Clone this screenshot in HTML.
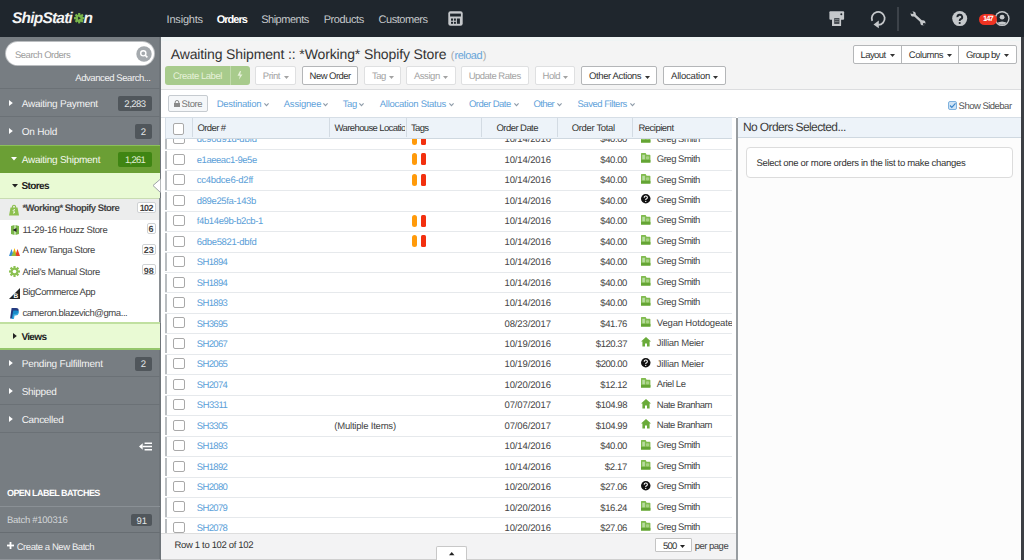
<!DOCTYPE html><html><head><meta charset="utf-8"><style>
*{box-sizing:border-box;margin:0;padding:0}
html,body{width:1024px;height:560px;overflow:hidden;font-family:"Liberation Sans",sans-serif;background:#fff;position:relative;text-rendering:geometricPrecision}
.t{position:absolute;white-space:nowrap;line-height:1}
.b{position:absolute}
svg{position:absolute;overflow:visible}
</style></head><body>
<div class="b" style="left:0px;top:0px;width:1024px;height:37px;background:#1f262d"></div>
<div class="t" style="left: 12px; top: 11px; font-size: 15.5px; color: rgb(244, 244, 244); font-weight: bold; font-style: italic; letter-spacing: -0.795px;">ShipStati</div>
<div class="t" style="left:83.6px;top:11px;font-size:15.5px;color:#f4f4f4;font-weight:bold;font-style:italic">n</div>
<svg style="left:74.3px;top:13.4px" width="10.4" height="10.4" viewBox="-5.2 -5.2 10.4 10.4"><g fill="#79b54a"><circle r="3.7"></circle><rect x="-1.1" y="-5.2" width="2.2" height="2.4" transform="rotate(0)"></rect><rect x="-1.1" y="-5.2" width="2.2" height="2.4" transform="rotate(45)"></rect><rect x="-1.1" y="-5.2" width="2.2" height="2.4" transform="rotate(90)"></rect><rect x="-1.1" y="-5.2" width="2.2" height="2.4" transform="rotate(135)"></rect><rect x="-1.1" y="-5.2" width="2.2" height="2.4" transform="rotate(180)"></rect><rect x="-1.1" y="-5.2" width="2.2" height="2.4" transform="rotate(225)"></rect><rect x="-1.1" y="-5.2" width="2.2" height="2.4" transform="rotate(270)"></rect><rect x="-1.1" y="-5.2" width="2.2" height="2.4" transform="rotate(315)"></rect></g><path d="M-1.1 -1.6 L1.7 0 L-1.1 1.6 Z" fill="#1f262d"></path></svg>
<div class="t" style="left: 166.6px; top: 15px; font-size: 11px; color: rgb(197, 200, 203); letter-spacing: -0.201px;">Insights</div>
<div class="t" style="left: 216.7px; top: 15px; font-size: 11px; color: rgb(255, 255, 255); font-weight: bold; letter-spacing: -0.991px;">Orders</div>
<div class="t" style="left: 261.2px; top: 15px; font-size: 11px; color: rgb(197, 200, 203); letter-spacing: -0.496px;">Shipments</div>
<div class="t" style="left: 323.7px; top: 15px; font-size: 11px; color: rgb(197, 200, 203); letter-spacing: -0.416px;">Products</div>
<div class="t" style="left: 378.5px; top: 15px; font-size: 11px; color: rgb(197, 200, 203); letter-spacing: -0.46px;">Customers</div>
<svg style="left:448px;top:11px" width="15" height="15" viewBox="0 0 15 15"><rect x="0.3" y="0.3" width="14.4" height="14.4" rx="2.2" fill="#c5c8cb"></rect><rect x="2.1" y="2.6" width="10.8" height="2.9" fill="#1f262d"></rect><rect x="3" y="7.5" width="2" height="2.2" fill="#1f262d"></rect><rect x="3" y="10.8" width="2" height="2" fill="#1f262d"></rect><rect x="5.9" y="7.5" width="2" height="2.2" fill="#1f262d"></rect><rect x="5.9" y="10.8" width="2" height="2" fill="#1f262d"></rect><rect x="8.9" y="7.5" width="3" height="5.3" fill="#1f262d"></rect></svg>
<svg style="left:829px;top:11px" width="16" height="16" viewBox="0 0 16 16"><rect x="0.4" y="0.3" width="14.7" height="8.4" rx="1" fill="#c5c8cb"></rect><rect x="3" y="6.6" width="9.1" height="8.4" rx="0.6" fill="#c5c8cb"></rect><rect x="5.2" y="7.1" width="5.2" height="5.8" fill="#3b4147"></rect><rect x="5.8" y="8.3" width="4" height="0.8" fill="#8f9498"></rect><rect x="5.8" y="10.3" width="4" height="0.8" fill="#8f9498"></rect><circle cx="12.3" cy="3.3" r="1" fill="#1f262d"></circle></svg>
<svg style="left:869px;top:10px" width="18" height="20" viewBox="0 0 18 20"><path d="M9.3 14.9 A6.5 6.5 0 1 0 3.2 10.9" fill="none" stroke="#c5c8cb" stroke-width="1.8"></path><path d="M4.5 14.6 L9.8 10.6 L9.8 18.2 Z" fill="#c5c8cb"></path></svg>
<div class="b" style="left:897.4px;top:7px;width:1.2px;height:24px;background:#3c4249"></div>
<svg style="left:910.3px;top:11.2px" width="16.5" height="14.85" viewBox="0 0 20 18"><path d="M4.5 4.2 L15.3 14" stroke="#c5c8cb" stroke-width="2.8" stroke-linecap="round"></path><circle cx="3.9" cy="3.7" r="3.1" fill="#c5c8cb"></circle><circle cx="15.6" cy="14.3" r="3.1" fill="#c5c8cb"></circle><path d="M1.2 2.6 L3.2 0.6 L4.4 3.2 Z" fill="#1f262d"></path><circle cx="2.5" cy="2.2" r="1.4" fill="#1f262d"></circle><circle cx="17" cy="15.8" r="1.4" fill="#1f262d"></circle></svg>
<svg style="left:952px;top:11px" width="16" height="16" viewBox="0 0 16 16"><circle cx="7.7" cy="7.6" r="7.5" fill="#c5c8cb"></circle><path d="M5.4 6.1 A2.4 2.3 0 1 1 8.6 8.2 Q7.7 8.7 7.7 9.9" fill="none" stroke="#1f262d" stroke-width="1.9"></path><circle cx="7.7" cy="12" r="1.1" fill="#1f262d"></circle></svg>
<svg style="left:994.5px;top:11px" width="16" height="16" viewBox="0 0 16 16"><defs><clipPath id="avc"><circle cx="7.1" cy="7.6" r="6.2"></circle></clipPath></defs><circle cx="7.1" cy="7.6" r="7.5" fill="#c5c8cb"></circle><circle cx="7.1" cy="7.6" r="6.1" fill="#1f262d"></circle><g clip-path="url(#avc)"><circle cx="7.1" cy="6.2" r="2.4" fill="#c5c8cb"></circle><path d="M0 13.5 Q7.1 7.5 14.2 13.5 L14.2 16 L0 16 Z" fill="#c5c8cb"></path></g></svg>
<div class="b" style="left:978.7px;top:13.5px;width:18.2px;height:11px;background:#ee3322;border-radius:5.5px"></div>
<div class="t" style="left: 982.9px; top: 15px; font-size: 7.5px; color: rgb(255, 255, 255); font-weight: bold; letter-spacing: -0.871px;">147</div>
<div class="b" style="left:0px;top:37px;width:160px;height:523px;background:#777d82"></div>
<div class="b" style="left:159px;top:37px;width:1.7px;height:523px;background:#6e7479"></div>
<div class="b" style="left:6px;top:42px;width:148px;height:23px;background:#fff;border-radius:12px;box-shadow:0 0 0 1px rgba(255,255,255,.5)"></div>
<div class="t" style="left: 15px; top: 51px; font-size: 9.5px; color: rgb(155, 155, 155); letter-spacing: -0.502px;">Search Orders</div>
<svg style="left:136px;top:46px" width="16" height="16" viewBox="0 0 16 16"><circle cx="8" cy="8" r="7.7" fill="#a5aaae"></circle><circle cx="7.3" cy="7.3" r="2.6" fill="none" stroke="#fff" stroke-width="1.4"></circle><path d="M9.2 9.2 L11.4 11.4" stroke="#fff" stroke-width="1.6"></path></svg>
<div class="t" style="right: 873.5px; top: 74px; font-size: 9.5px; color: rgb(242, 242, 242); letter-spacing: -0.428px;">Advanced Search...</div>
<div class="b" style="left:0px;top:88px;width:160px;height:1px;background:#6b7176"></div>
<svg style="left:9.3px;top:100px" width="4" height="6" viewBox="0 0 4 6"><path d="M0 0 L3.8 3 L0 6 Z" fill="#fff"></path></svg>
<div class="t" style="left: 21.7px; top: 100px; font-size: 10px; color: rgb(243, 243, 243); letter-spacing: -0.232px;">Awaiting Payment</div>
<div class="b" style="left:118px;top:96px;width:34px;height:14.5px;background:#50565b;border-radius:2px"></div>
<div class="t" style="left: 118px; width: 34px; text-align: center; top: 100px; font-size: 9.5px; color: rgb(227, 230, 232); letter-spacing: -0.497px;">2,283</div>
<div class="b" style="left:0px;top:116px;width:160px;height:1px;background:#6b7176"></div>
<svg style="left:9.3px;top:127.9px" width="4" height="6" viewBox="0 0 4 6"><path d="M0 0 L3.8 3 L0 6 Z" fill="#fff"></path></svg>
<div class="t" style="left: 21.7px; top: 128px; font-size: 10px; color: rgb(243, 243, 243); letter-spacing: -0.187px;">On Hold</div>
<div class="b" style="left:135px;top:124px;width:17px;height:14.5px;background:#50565b;border-radius:2px"></div>
<div class="t" style="left:135px;width:17px;text-align:center;top:128px;font-size:9.5px;color:#e3e6e8;">2</div>
<div class="b" style="left:0px;top:144.6px;width:160px;height:28px;background:#6b9f35"></div>
<div class="b" style="left:0px;top:144.6px;width:160px;height:1px;background:#8cc05a"></div>
<svg style="left:10.7px;top:157px" width="6" height="3.5" viewBox="0 0 6 3.5"><path d="M0 0 L6 0 L3 3.5 Z" fill="#fff"></path></svg>
<div class="t" style="left: 21.7px; top: 156px; font-size: 10px; color: rgb(245, 249, 240); letter-spacing: -0.241px;">Awaiting Shipment</div>
<div class="b" style="left:118px;top:152px;width:34px;height:14.5px;background:#3f8513;border-radius:2px"></div>
<div class="t" style="left: 118px; width: 34px; text-align: center; top: 156px; font-size: 9.5px; color: rgb(226, 239, 214); letter-spacing: -0.722px;">1,261</div>
<div class="b" style="left:0px;top:172.6px;width:160px;height:26px;background:#e9fad4"></div>
<div class="b" style="left:0px;top:198px;width:160px;height:1px;background:#c9dcb2"></div>
<svg style="left:12px;top:183.5px" width="6" height="3.5" viewBox="0 0 6 3.5"><path d="M0 0 L6 0 L3 3.5 Z" fill="#222"></path></svg>
<div class="t" style="left: 21.4px; top: 182px; font-size: 10px; color: rgb(34, 34, 34); font-weight: bold; letter-spacing: -0.612px;">Stores</div>
<svg style="left:152px;top:179px" width="9" height="14" viewBox="0 0 9 14"><path d="M8.5 0 L1 6.5 L8.5 13.5" fill="#fff" stroke="#9ea3a7" stroke-width="1"></path></svg>
<div class="b" style="left:0px;top:198.6px;width:159px;height:124px;background:#fff"></div>
<div class="b" style="left:0px;top:198.6px;width:159px;height:21px;background:#eceded"></div>
<div class="b" style="left:159px;top:198px;width:1.7px;height:125px;background:#8a8f93"></div>
<svg style="left:9px;top:204.5px" width="10" height="10.5" viewBox="0 0 10 10.5"><path d="M1.5 2.5 L8.5 2.5 L10 10.5 L0 10.5 Z" fill="#8dc04f"></path><path d="M3.3 3 Q3.3 0.3 5 0.3 Q6.7 0.3 6.7 3" fill="none" stroke="#8dc04f" stroke-width="1.1"></path><path d="M6 4.8 Q4.5 4.3 4.2 5.5 Q4.5 6.5 5.6 6.9 Q6.2 7.9 4 8.1" fill="none" stroke="#fff" stroke-width="1"></path></svg>
<div class="t" style="left: 22.4px; top: 204px; font-size: 9.5px; color: rgb(68, 68, 68); font-weight: bold; letter-spacing: -0.56px;">*Working* Shopify Store</div>
<div class="b" style="left:136.6px;top:201.6px;width:19.3px;height:11px;border:1px solid #cfd2d4;border-radius:2px;background:#fff"></div>
<div class="t" style="left: 136.6px; width: 19.3px; text-align: center; top: 204px; font-size: 9px; color: rgb(68, 68, 68); font-weight: bold; letter-spacing: -0.705px;">102</div>
<svg style="left:10.5px;top:225px" width="8" height="10" viewBox="0 0 8 10"><path d="M0 1 L3.5 0 L3.5 10 L0 9 Z" fill="#7ab648"></path><path d="M4.5 0 L8 1 L8 9 L4.5 10 Z" fill="#7ab648"></path><path d="M1.5 5 L5.5 3 L5.5 7 Z" fill="#222"></path></svg>
<div class="t" style="left: 22.4px; top: 226px; font-size: 9.5px; color: rgb(68, 68, 68); letter-spacing: -0.366px;">11-29-16 Houzz Store</div>
<div class="b" style="left:146.5px;top:222.8px;width:9.1px;height:11px;border:1px solid #cfd2d4;border-radius:2px;background:#fff"></div>
<div class="t" style="left:146.5px;width:9.1px;text-align:center;top:225px;font-size:9px;color:#444;font-weight:bold;">6</div>
<svg style="left:9px;top:247px" width="11" height="9" viewBox="0 0 11 9"><path d="M0 9 L2.5 2 L5 9 Z" fill="#3d8fd6"></path><path d="M3 9 L5.5 1 L8 9 Z" fill="#f0b400"></path><path d="M6 9 L8.5 2 L11 9 Z" fill="#e8402c"></path><path d="M2 9 L5 4 L7.5 9 Z" fill="#7fbf4d" opacity=".8"></path></svg>
<div class="t" style="left: 22.4px; top: 246px; font-size: 9.5px; color: rgb(68, 68, 68); letter-spacing: -0.412px;">A new Tanga Store</div>
<div class="b" style="left:141.9px;top:243.5px;width:13.7px;height:11px;border:1px solid #cfd2d4;border-radius:2px;background:#fff"></div>
<div class="t" style="left:141.9px;width:13.7px;text-align:center;top:246px;font-size:9px;color:#444;font-weight:bold;">23</div>
<svg style="left:9px;top:266px" width="11" height="11" viewBox="0 0 12 12"><g fill="#8cc152"><circle cx="6" cy="6" r="4.2"></circle><rect x="4.8" y="0" width="2.4" height="12"></rect><rect x="0" y="4.8" width="12" height="2.4"></rect><rect x="4.8" y="0" width="2.4" height="12" transform="rotate(45 6 6)"></rect><rect x="4.8" y="0" width="2.4" height="12" transform="rotate(-45 6 6)"></rect></g><circle cx="6" cy="6" r="2" fill="#fff"></circle></svg>
<div class="t" style="left: 22.4px; top: 268px; font-size: 9.5px; color: rgb(68, 68, 68); letter-spacing: -0.354px;">Ariel's Manual Store</div>
<div class="b" style="left:141.9px;top:264.4px;width:13.7px;height:11px;border:1px solid #cfd2d4;border-radius:2px;background:#fff"></div>
<div class="t" style="left:141.9px;width:13.7px;text-align:center;top:267px;font-size:9px;color:#444;font-weight:bold;">98</div>
<svg style="left:9px;top:287.5px" width="11" height="11" viewBox="0 0 11 11"><path d="M11 0 L11 11 L0 11 Z" fill="#222"></path><text x="4.6" y="10" font-size="6.5" font-weight="bold" fill="#fff" font-family="Liberation Sans">B</text></svg>
<div class="t" style="left: 22.4px; top: 288px; font-size: 9.5px; color: rgb(68, 68, 68); letter-spacing: -0.432px;">BigCommerce App</div>
<svg style="left:9.7px;top:307.7px" width="9.2" height="11" viewBox="0 0 9 11"><path d="M1.5 0 L6 0 Q9 0 8.5 3 Q8 6 5 6 L3.5 6 L2.8 10.5 L0 10.5 Z" fill="#253b80"></path><path d="M3.2 2.5 L6.5 2.5 Q9.3 2.5 8.7 5 Q8.2 7.5 5.5 7.5 L4.5 7.5 L3.8 11 L1.5 11 Z" fill="#179bd7" opacity=".85"></path></svg>
<div class="t" style="left: 22.4px; top: 309px; font-size: 9.5px; color: rgb(68, 68, 68); letter-spacing: -0.431px;">cameron.blazevich@gma...</div>
<div class="b" style="left:0px;top:322.4px;width:160px;height:27px;background:#e9fad4"></div>
<div class="b" style="left:0px;top:322.2px;width:160px;height:1.5px;background:#c0e0a0"></div>
<div class="b" style="left:0px;top:347.8px;width:160px;height:1.8px;background:#95c66c"></div>
<svg style="left:12.5px;top:332.5px" width="4" height="6" viewBox="0 0 4 6"><path d="M0 0 L3.8 3 L0 6 Z" fill="#222"></path></svg>
<div class="t" style="left: 21.4px; top: 333px; font-size: 10px; color: rgb(34, 34, 34); font-weight: bold; letter-spacing: -0.652px;">Views</div>
<svg style="left:9.3px;top:360px" width="4" height="6" viewBox="0 0 4 6"><path d="M0 0 L3.8 3 L0 6 Z" fill="#fff"></path></svg>
<div class="t" style="left: 21.7px; top: 360px; font-size: 10px; color: rgb(243, 243, 243); letter-spacing: -0.209px;">Pending Fulfillment</div>
<div class="b" style="left:135px;top:356.7px;width:17px;height:13.900000000000034px;background:#50565b;border-radius:2px"></div>
<div class="t" style="left:135px;width:17px;text-align:center;top:360px;font-size:9.5px;color:#e3e6e8;">2</div>
<div class="b" style="left:0px;top:376.4px;width:160px;height:1px;background:#6b7176"></div>
<svg style="left:9.3px;top:388px" width="4" height="6" viewBox="0 0 4 6"><path d="M0 0 L3.8 3 L0 6 Z" fill="#fff"></path></svg>
<div class="t" style="left: 21.7px; top: 388px; font-size: 10px; color: rgb(243, 243, 243); letter-spacing: -0.273px;">Shipped</div>
<div class="b" style="left:0px;top:404.3px;width:160px;height:1px;background:#6b7176"></div>
<svg style="left:9.3px;top:416px" width="4" height="6" viewBox="0 0 4 6"><path d="M0 0 L3.8 3 L0 6 Z" fill="#fff"></path></svg>
<div class="t" style="left: 21.7px; top: 416px; font-size: 10px; color: rgb(243, 243, 243); letter-spacing: -0.301px;">Cancelled</div>
<div class="b" style="left:0px;top:432.3px;width:160px;height:1px;background:#6b7176"></div>
<svg style="left:138.8px;top:441.8px" width="13" height="9" viewBox="0 0 14 9"><path d="M0 4.5 L4 1 L4 8 Z" fill="#fff"></path><rect x="4" y="3.7" width="10" height="1.6" fill="#fff"></rect><rect x="6" y="0.2" width="8" height="1.6" fill="#fff"></rect><rect x="6" y="7.2" width="8" height="1.6" fill="#fff"></rect></svg>
<div class="t" style="left: 7px; top: 489px; font-size: 9px; color: rgb(255, 255, 255); font-weight: bold; letter-spacing: -0.578px;">OPEN LABEL BATCHES</div>
<div class="b" style="left:0px;top:505.6px;width:160px;height:1px;background:#8a9095"></div>
<div class="t" style="left: 7px; top: 516px; font-size: 9.5px; color: rgb(211, 214, 216); letter-spacing: -0.269px;">Batch #100316</div>
<div class="b" style="left:131.4px;top:513.7px;width:20.900000000000006px;height:12.799999999999955px;background:#50565b;border-radius:2px"></div>
<div class="t" style="left:131.4px;width:20.900000000000006px;text-align:center;top:517px;font-size:9.5px;color:#e3e6e8;">91</div>
<div class="b" style="left:0px;top:531.8px;width:160px;height:1.6px;background:#676d72"></div>
<div class="b" style="left:0px;top:558.6px;width:160px;height:1.4px;background:#8f9499"></div>
<svg style="left:7px;top:542px" width="7" height="7" viewBox="0 0 7 7"><rect x="2.6" y="0" width="1.8" height="7" fill="#fff"></rect><rect x="0" y="2.6" width="7" height="1.8" fill="#fff"></rect></svg>
<div class="t" style="left: 16.7px; top: 543px; font-size: 9.5px; color: rgb(240, 240, 240); letter-spacing: -0.425px;">Create a New Batch</div>
<div class="b" style="left:161px;top:37px;width:860px;height:51.5px;background:#f4f4f4"></div>
<div class="b" style="left:161px;top:37px;width:860px;height:4px;background:#eff4f4"></div>
<div class="b" style="left:161px;top:88.7px;width:860px;height:1px;background:#dcdddf"></div>
<div class="t" style="left: 170.7px; top: 47px; font-size: 14px; color: rgb(51, 51, 51); letter-spacing: -0.125px;">Awaiting Shipment :: *Working* Shopify Store</div>
<div class="t" style="left:450.80px;top:51.00px;font-size:11px;color:#aaa;">(</div>
<div class="t" style="left: 454.5px; top: 51px; font-size: 11px; color: rgb(104, 165, 217); letter-spacing: -0.492px;">reload</div>
<div class="t" style="left:482.80px;top:51.00px;font-size:11px;color:#aaa;">)</div>
<div class="b" style="left:165.1px;top:65.7px;width:84.5px;height:19px;background:#a8cb8c;border-radius:3px"></div>
<div class="b" style="left:230px;top:65.7px;width:1px;height:19px;background:#c2dbad"></div>
<div class="t" style="left: 172.9px; top: 72px; font-size: 9.5px; color: rgb(230, 241, 217); letter-spacing: -0.444px;">Create Label</div>
<svg style="left:237px;top:71.3px" width="6" height="8.5" viewBox="0 0 6 8.5"><path d="M3 0 L0.5 4.8 L2.8 4.8 L2 8.5 L5.5 3.6 L3.2 3.6 L4 0 Z" fill="#e6f1d9"></path></svg>
<div class="b" style="left:255.2px;top:65.7px;width:41.30000000000001px;height:19.0px;background:#fff;border:1px solid #dfe0e1;border-radius:2px"></div>
<div class="t" style="left: 262.8px; top: 72px; font-size: 9.5px; color: rgb(163, 163, 163); letter-spacing: -0.474px;">Print</div>
<svg style="left:284.2px;top:75.6px" width="5" height="3" viewBox="0 0 5 3"><path d="M0 0 L5 0 L2.5 3 Z" fill="#a3a3a3"></path></svg>
<div class="b" style="left:302.2px;top:65.7px;width:56.0px;height:19.0px;background:#fff;border:1px solid #b4b6b8;border-radius:2px"></div>
<div class="t" style="left: 309.6px; top: 72px; font-size: 9.5px; color: rgb(51, 51, 51); letter-spacing: -0.545px;">New Order</div>
<div class="b" style="left:364.2px;top:65.7px;width:37.10000000000002px;height:19.0px;background:#fff;border:1px solid #dfe0e1;border-radius:2px"></div>
<div class="t" style="left: 372px; top: 72px; font-size: 9.5px; color: rgb(163, 163, 163); letter-spacing: -0.517px;">Tag</div>
<svg style="left:389.2px;top:75.6px" width="5" height="3" viewBox="0 0 5 3"><path d="M0 0 L5 0 L2.5 3 Z" fill="#a3a3a3"></path></svg>
<div class="b" style="left:406.4px;top:65.7px;width:49.200000000000045px;height:19.0px;background:#fff;border:1px solid #dfe0e1;border-radius:2px"></div>
<div class="t" style="left: 413.9px; top: 72px; font-size: 9.5px; color: rgb(163, 163, 163); letter-spacing: -0.446px;">Assign</div>
<svg style="left:443px;top:75.6px" width="5" height="3" viewBox="0 0 5 3"><path d="M0 0 L5 0 L2.5 3 Z" fill="#a3a3a3"></path></svg>
<div class="b" style="left:461px;top:65.7px;width:68.39999999999998px;height:19.0px;background:#fff;border:1px solid #dfe0e1;border-radius:2px"></div>
<div class="t" style="left: 468.7px; top: 72px; font-size: 9.5px; color: rgb(163, 163, 163); letter-spacing: -0.513px;">Update Rates</div>
<div class="b" style="left:535.1px;top:65.7px;width:40.19999999999993px;height:19.0px;background:#fff;border:1px solid #dfe0e1;border-radius:2px"></div>
<div class="t" style="left: 542.5px; top: 72px; font-size: 9.5px; color: rgb(163, 163, 163); letter-spacing: -0.485px;">Hold</div>
<svg style="left:563px;top:75.6px" width="5" height="3" viewBox="0 0 5 3"><path d="M0 0 L5 0 L2.5 3 Z" fill="#a3a3a3"></path></svg>
<div class="b" style="left:581.3px;top:65.7px;width:76.10000000000002px;height:19.0px;background:#fff;border:1px solid #b4b6b8;border-radius:2px"></div>
<div class="t" style="left: 589px; top: 72px; font-size: 9.5px; color: rgb(51, 51, 51); letter-spacing: -0.375px;">Other Actions</div>
<svg style="left:645px;top:75.6px" width="5" height="3" viewBox="0 0 5 3"><path d="M0 0 L5 0 L2.5 3 Z" fill="#333"></path></svg>
<div class="b" style="left:663.4px;top:65.7px;width:62.30000000000007px;height:19.0px;background:#fff;border:1px solid #b4b6b8;border-radius:2px"></div>
<div class="t" style="left: 671px; top: 72px; font-size: 9.5px; color: rgb(51, 51, 51); letter-spacing: -0.201px;">Allocation</div>
<svg style="left:713.4px;top:75.6px" width="5" height="3" viewBox="0 0 5 3"><path d="M0 0 L5 0 L2.5 3 Z" fill="#333"></path></svg>
<div class="b" style="left:852.9px;top:44.5px;width:163.8px;height:19.2px;background:#fff;border:1px solid #b4b6b8;border-radius:2px"></div>
<div class="b" style="left:901px;top:44.5px;width:1px;height:19.2px;background:#b4b6b8"></div>
<div class="b" style="left:958.3px;top:44.5px;width:1px;height:19.2px;background:#b4b6b8"></div>
<div class="t" style="left: 860.4px; top: 51px; font-size: 9.5px; color: rgb(51, 51, 51); letter-spacing: -0.537px;">Layout</div>
<svg style="left:889.6px;top:54.4px" width="5" height="3" viewBox="0 0 5 3"><path d="M0 0 L5 0 L2.5 3 Z" fill="#333"></path></svg>
<div class="t" style="left: 908.8px; top: 51px; font-size: 9.5px; color: rgb(51, 51, 51); letter-spacing: -0.456px;">Columns</div>
<svg style="left:946.9px;top:54.4px" width="5" height="3" viewBox="0 0 5 3"><path d="M0 0 L5 0 L2.5 3 Z" fill="#333"></path></svg>
<div class="t" style="left: 966px; top: 51px; font-size: 9.5px; color: rgb(51, 51, 51); letter-spacing: -0.675px;">Group by</div>
<svg style="left:1003.7px;top:54.4px" width="5" height="3" viewBox="0 0 5 3"><path d="M0 0 L5 0 L2.5 3 Z" fill="#333"></path></svg>
<div class="b" style="left:161px;top:89.7px;width:860px;height:27.3px;background:#fff"></div>
<div class="b" style="left:161px;top:116.6px;width:575px;height:1px;background:#dfe3e7"></div>
<div class="b" style="left:168.2px;top:94.9px;width:39.4px;height:17.6px;background:#f5f7f9;border:1px solid #c6cbd0;border-radius:2px"></div>
<svg style="left:173.5px;top:100px" width="6" height="7" viewBox="0 0 6 7"><rect x="0" y="3" width="6" height="4" fill="#8a8a8a"></rect><path d="M1.2 3.2 L1.2 2 Q1.2 0.5 3 0.5 Q4.8 0.5 4.8 2 L4.8 3.2" fill="none" stroke="#8a8a8a" stroke-width="1"></path></svg>
<div class="t" style="left: 181.6px; top: 100px; font-size: 9.5px; color: rgb(119, 119, 119); letter-spacing: -0.456px;">Store</div>
<div class="t" style="left: 216.7px; top: 100px; font-size: 9.5px; color: rgb(95, 162, 218); letter-spacing: -0.274px;">Destination</div>
<svg style="left:264.3px;top:103.2px" width="5" height="3.2" viewBox="0 0 5 3.2"><path d="M0.4 0.4 L2.5 2.6 L4.6 0.4" fill="none" stroke="#8d9ba8" stroke-width="1.1"></path></svg>
<div class="t" style="left: 283.7px; top: 100px; font-size: 9.5px; color: rgb(95, 162, 218); letter-spacing: -0.185px;">Assignee</div>
<svg style="left:322.9px;top:103.2px" width="5" height="3.2" viewBox="0 0 5 3.2"><path d="M0.4 0.4 L2.5 2.6 L4.6 0.4" fill="none" stroke="#8d9ba8" stroke-width="1.1"></path></svg>
<div class="t" style="left: 342.8px; top: 100px; font-size: 9.5px; color: rgb(95, 162, 218); letter-spacing: -0.467px;">Tag</div>
<svg style="left:359.2px;top:103.2px" width="5" height="3.2" viewBox="0 0 5 3.2"><path d="M0.4 0.4 L2.5 2.6 L4.6 0.4" fill="none" stroke="#8d9ba8" stroke-width="1.1"></path></svg>
<div class="t" style="left: 379.8px; top: 100px; font-size: 9.5px; color: rgb(95, 162, 218); letter-spacing: -0.27px;">Allocation Status</div>
<svg style="left:449.2px;top:103.2px" width="5" height="3.2" viewBox="0 0 5 3.2"><path d="M0.4 0.4 L2.5 2.6 L4.6 0.4" fill="none" stroke="#8d9ba8" stroke-width="1.1"></path></svg>
<div class="t" style="left: 468.9px; top: 100px; font-size: 9.5px; color: rgb(95, 162, 218); letter-spacing: -0.512px;">Order Date</div>
<svg style="left:513.9px;top:103.2px" width="5" height="3.2" viewBox="0 0 5 3.2"><path d="M0.4 0.4 L2.5 2.6 L4.6 0.4" fill="none" stroke="#8d9ba8" stroke-width="1.1"></path></svg>
<div class="t" style="left: 533.5px; top: 100px; font-size: 9.5px; color: rgb(95, 162, 218); letter-spacing: -0.624px;">Other</div>
<svg style="left:557.4px;top:103.2px" width="5" height="3.2" viewBox="0 0 5 3.2"><path d="M0.4 0.4 L2.5 2.6 L4.6 0.4" fill="none" stroke="#8d9ba8" stroke-width="1.1"></path></svg>
<div class="t" style="left: 577.5px; top: 100px; font-size: 9.5px; color: rgb(95, 162, 218); letter-spacing: -0.466px;">Saved Filters</div>
<svg style="left:629.9px;top:103.2px" width="5" height="3.2" viewBox="0 0 5 3.2"><path d="M0.4 0.4 L2.5 2.6 L4.6 0.4" fill="none" stroke="#8d9ba8" stroke-width="1.1"></path></svg>
<svg style="left:948px;top:101px" width="9" height="9" viewBox="0 0 9 9"><rect x="0.5" y="0.5" width="8" height="8" rx="1.5" fill="#cfe3f5" stroke="#7fb2de" stroke-width="1"></rect><path d="M2 4.5 L3.8 6.3 L7.5 2.3" fill="none" stroke="#3c86c9" stroke-width="1.2"></path></svg>
<div class="t" style="left: 958.6px; top: 102px; font-size: 9.5px; color: rgb(85, 85, 85); letter-spacing: -0.517px;">Show Sidebar</div>
<div class="b" style="left:0;top:139px;width:732.3px;height:394px;overflow:hidden">
<div class="b" style="left:165px;top:-10.15px;width:567.3px;height:20.45px;background:#fff;border-top:1px solid #e6e9ec"></div>
<div class="b" style="left:165.3px;top:-8.65px;width:1.8px;height:18.45px;background:#b9bdc0"></div>
<div class="b" style="left:173.1px;top:-5.65px;width:11.5px;height:11px;border:1px solid #a9a9a9;border-radius:2px;background:#fff"></div>
<div class="t" style="left: 196.8px; top: -4px; font-size: 9.5px; color: rgb(91, 160, 216); letter-spacing: -0.259px;">dc90d91d-dbfd</div>
<div class="b" style="left:411.5px;top:-6.05px;width:5px;height:11.8px;background:#ff9a0a;border-radius:2.5px"></div>
<div class="b" style="left:420.9px;top:-6.05px;width:5px;height:11.8px;background:#f2300f;border-radius:1.5px"></div>
<div class="t" style="right: 181.5px; top: -4px; font-size: 9.5px; color: rgb(68, 68, 68); letter-spacing: -0.129px;">10/14/2016</div>
<div class="t" style="right: 105.3px; top: -4px; font-size: 9.5px; color: rgb(68, 68, 68); letter-spacing: -0.395px;">$40.00</div>
<svg style="left:641px;top:-6.15px" width="9.4" height="9.6" viewBox="0 0 9.4 9.6"><path d="M0 0.6 Q0 0 0.6 0 L4.6 0 L5.6 1.8 L8.8 1.8 Q9.4 1.8 9.4 2.4 L9.4 9.6 L0 9.6 Z" fill="#80bb4e"></path><rect x="1.3" y="1.8" width="2.6" height="4.6" fill="#b9dca2"></rect><rect x="5" y="3.2" width="3.1" height="3.2" rx="1" fill="#a8d286"></rect><rect x="0" y="6.9" width="9.4" height="2.7" fill="#64a434"></rect></svg>
<div class="t" style="left: 656.8px; top: -4px; font-size: 9.5px; color: rgb(68, 68, 68); letter-spacing: -0.495px;">Greg Smith</div>
<div class="b" style="left:165px;top:10.30px;width:567.3px;height:20.45px;background:#fff;border-top:1px solid #e6e9ec"></div>
<div class="b" style="left:165.3px;top:11.80px;width:1.8px;height:18.45px;background:#b9bdc0"></div>
<div class="b" style="left:173.1px;top:14.80px;width:11.5px;height:11px;border:1px solid #a9a9a9;border-radius:2px;background:#fff"></div>
<div class="t" style="left: 196.8px; top: 17px; font-size: 9.5px; color: rgb(91, 160, 216); letter-spacing: -0.471px;">e1aeeac1-9e5e</div>
<div class="b" style="left:411.5px;top:14.40px;width:5px;height:11.8px;background:#ff9a0a;border-radius:2.5px"></div>
<div class="b" style="left:420.9px;top:14.40px;width:5px;height:11.8px;background:#f2300f;border-radius:1.5px"></div>
<div class="t" style="right: 181.5px; top: 17px; font-size: 9.5px; color: rgb(68, 68, 68); letter-spacing: -0.129px;">10/14/2016</div>
<div class="t" style="right: 105.3px; top: 17px; font-size: 9.5px; color: rgb(68, 68, 68); letter-spacing: -0.395px;">$40.00</div>
<svg style="left:641px;top:14.30px" width="9.4" height="9.6" viewBox="0 0 9.4 9.6"><path d="M0 0.6 Q0 0 0.6 0 L4.6 0 L5.6 1.8 L8.8 1.8 Q9.4 1.8 9.4 2.4 L9.4 9.6 L0 9.6 Z" fill="#80bb4e"></path><rect x="1.3" y="1.8" width="2.6" height="4.6" fill="#b9dca2"></rect><rect x="5" y="3.2" width="3.1" height="3.2" rx="1" fill="#a8d286"></rect><rect x="0" y="6.9" width="9.4" height="2.7" fill="#64a434"></rect></svg>
<div class="t" style="left: 656.8px; top: 16px; font-size: 9.5px; color: rgb(68, 68, 68); letter-spacing: -0.495px;">Greg Smith</div>
<div class="b" style="left:165px;top:30.75px;width:567.3px;height:20.45px;background:#fff;border-top:1px solid #e6e9ec"></div>
<div class="b" style="left:165.3px;top:32.25px;width:1.8px;height:18.45px;background:#b9bdc0"></div>
<div class="b" style="left:173.1px;top:35.25px;width:11.5px;height:11px;border:1px solid #a9a9a9;border-radius:2px;background:#fff"></div>
<div class="t" style="left: 196.8px; top: 37px; font-size: 9.5px; color: rgb(91, 160, 216); letter-spacing: -0.255px;">cc4bdce6-d2ff</div>
<div class="b" style="left:411.5px;top:34.85px;width:5px;height:11.8px;background:#ff9a0a;border-radius:2.5px"></div>
<div class="b" style="left:420.9px;top:34.85px;width:5px;height:11.8px;background:#f2300f;border-radius:1.5px"></div>
<div class="t" style="right: 181.5px; top: 37px; font-size: 9.5px; color: rgb(68, 68, 68); letter-spacing: -0.129px;">10/14/2016</div>
<div class="t" style="right: 105.3px; top: 37px; font-size: 9.5px; color: rgb(68, 68, 68); letter-spacing: -0.395px;">$40.00</div>
<svg style="left:641px;top:34.75px" width="9.4" height="9.6" viewBox="0 0 9.4 9.6"><path d="M0 0.6 Q0 0 0.6 0 L4.6 0 L5.6 1.8 L8.8 1.8 Q9.4 1.8 9.4 2.4 L9.4 9.6 L0 9.6 Z" fill="#80bb4e"></path><rect x="1.3" y="1.8" width="2.6" height="4.6" fill="#b9dca2"></rect><rect x="5" y="3.2" width="3.1" height="3.2" rx="1" fill="#a8d286"></rect><rect x="0" y="6.9" width="9.4" height="2.7" fill="#64a434"></rect></svg>
<div class="t" style="left: 656.8px; top: 37px; font-size: 9.5px; color: rgb(68, 68, 68); letter-spacing: -0.495px;">Greg Smith</div>
<div class="b" style="left:165px;top:51.20px;width:567.3px;height:20.45px;background:#fff;border-top:1px solid #e6e9ec"></div>
<div class="b" style="left:165.3px;top:52.70px;width:1.8px;height:18.45px;background:#b9bdc0"></div>
<div class="b" style="left:173.1px;top:55.70px;width:11.5px;height:11px;border:1px solid #a9a9a9;border-radius:2px;background:#fff"></div>
<div class="t" style="left: 196.8px; top: 58px; font-size: 9.5px; color: rgb(91, 160, 216); letter-spacing: -0.37px;">d89e25fa-143b</div>
<div class="t" style="right: 181.5px; top: 58px; font-size: 9.5px; color: rgb(68, 68, 68); letter-spacing: -0.129px;">10/14/2016</div>
<div class="t" style="right: 105.3px; top: 58px; font-size: 9.5px; color: rgb(68, 68, 68); letter-spacing: -0.395px;">$40.00</div>
<svg style="left:641.2px;top:55.20px" width="9.5" height="9.5" viewBox="0 0 9.5 9.5"><circle cx="4.75" cy="4.75" r="4.75" fill="#111"></circle><path d="M3.2 3.7 A1.6 1.5 0 1 1 5.2 5 Q4.75 5.3 4.75 6" fill="none" stroke="#fff" stroke-width="1.1"></path><circle cx="4.75" cy="7.4" r="0.65" fill="#fff"></circle></svg>
<div class="t" style="left: 656.8px; top: 57px; font-size: 9.5px; color: rgb(68, 68, 68); letter-spacing: -0.495px;">Greg Smith</div>
<div class="b" style="left:165px;top:71.65px;width:567.3px;height:20.45px;background:#fff;border-top:1px solid #e6e9ec"></div>
<div class="b" style="left:165.3px;top:73.15px;width:1.8px;height:18.45px;background:#b9bdc0"></div>
<div class="b" style="left:173.1px;top:76.15px;width:11.5px;height:11px;border:1px solid #a9a9a9;border-radius:2px;background:#fff"></div>
<div class="t" style="left: 196.8px; top: 78px; font-size: 9.5px; color: rgb(91, 160, 216); letter-spacing: -0.382px;">f4b14e9b-b2cb-1</div>
<div class="b" style="left:411.5px;top:75.75px;width:5px;height:11.8px;background:#ff9a0a;border-radius:2.5px"></div>
<div class="b" style="left:420.9px;top:75.75px;width:5px;height:11.8px;background:#f2300f;border-radius:1.5px"></div>
<div class="t" style="right: 181.5px; top: 78px; font-size: 9.5px; color: rgb(68, 68, 68); letter-spacing: -0.129px;">10/14/2016</div>
<div class="t" style="right: 105.3px; top: 78px; font-size: 9.5px; color: rgb(68, 68, 68); letter-spacing: -0.395px;">$40.00</div>
<svg style="left:641px;top:75.65px" width="9.4" height="9.6" viewBox="0 0 9.4 9.6"><path d="M0 0.6 Q0 0 0.6 0 L4.6 0 L5.6 1.8 L8.8 1.8 Q9.4 1.8 9.4 2.4 L9.4 9.6 L0 9.6 Z" fill="#80bb4e"></path><rect x="1.3" y="1.8" width="2.6" height="4.6" fill="#b9dca2"></rect><rect x="5" y="3.2" width="3.1" height="3.2" rx="1" fill="#a8d286"></rect><rect x="0" y="6.9" width="9.4" height="2.7" fill="#64a434"></rect></svg>
<div class="t" style="left: 656.8px; top: 77px; font-size: 9.5px; color: rgb(68, 68, 68); letter-spacing: -0.495px;">Greg Smith</div>
<div class="b" style="left:165px;top:92.10px;width:567.3px;height:20.45px;background:#fff;border-top:1px solid #e6e9ec"></div>
<div class="b" style="left:165.3px;top:93.60px;width:1.8px;height:18.45px;background:#b9bdc0"></div>
<div class="b" style="left:173.1px;top:96.60px;width:11.5px;height:11px;border:1px solid #a9a9a9;border-radius:2px;background:#fff"></div>
<div class="t" style="left: 196.8px; top: 99px; font-size: 9.5px; color: rgb(91, 160, 216); letter-spacing: -0.32px;">6dbe5821-dbfd</div>
<div class="b" style="left:411.5px;top:96.20px;width:5px;height:11.8px;background:#ff9a0a;border-radius:2.5px"></div>
<div class="b" style="left:420.9px;top:96.20px;width:5px;height:11.8px;background:#f2300f;border-radius:1.5px"></div>
<div class="t" style="right: 181.5px; top: 99px; font-size: 9.5px; color: rgb(68, 68, 68); letter-spacing: -0.129px;">10/14/2016</div>
<div class="t" style="right: 105.3px; top: 99px; font-size: 9.5px; color: rgb(68, 68, 68); letter-spacing: -0.395px;">$40.00</div>
<svg style="left:641px;top:96.10px" width="9.4" height="9.6" viewBox="0 0 9.4 9.6"><path d="M0 0.6 Q0 0 0.6 0 L4.6 0 L5.6 1.8 L8.8 1.8 Q9.4 1.8 9.4 2.4 L9.4 9.6 L0 9.6 Z" fill="#80bb4e"></path><rect x="1.3" y="1.8" width="2.6" height="4.6" fill="#b9dca2"></rect><rect x="5" y="3.2" width="3.1" height="3.2" rx="1" fill="#a8d286"></rect><rect x="0" y="6.9" width="9.4" height="2.7" fill="#64a434"></rect></svg>
<div class="t" style="left: 656.8px; top: 98px; font-size: 9.5px; color: rgb(68, 68, 68); letter-spacing: -0.495px;">Greg Smith</div>
<div class="b" style="left:165px;top:112.55px;width:567.3px;height:20.45px;background:#fff;border-top:1px solid #e6e9ec"></div>
<div class="b" style="left:165.3px;top:114.05px;width:1.8px;height:18.45px;background:#b9bdc0"></div>
<div class="b" style="left:173.1px;top:117.05px;width:11.5px;height:11px;border:1px solid #a9a9a9;border-radius:2px;background:#fff"></div>
<div class="t" style="left: 196.8px; top: 119px; font-size: 9.5px; color: rgb(91, 160, 216); letter-spacing: -0.649px;">SH1894</div>
<div class="t" style="right: 181.5px; top: 119px; font-size: 9.5px; color: rgb(68, 68, 68); letter-spacing: -0.129px;">10/14/2016</div>
<div class="t" style="right: 105.3px; top: 119px; font-size: 9.5px; color: rgb(68, 68, 68); letter-spacing: -0.395px;">$40.00</div>
<svg style="left:641px;top:116.55px" width="9.4" height="9.6" viewBox="0 0 9.4 9.6"><path d="M0 0.6 Q0 0 0.6 0 L4.6 0 L5.6 1.8 L8.8 1.8 Q9.4 1.8 9.4 2.4 L9.4 9.6 L0 9.6 Z" fill="#80bb4e"></path><rect x="1.3" y="1.8" width="2.6" height="4.6" fill="#b9dca2"></rect><rect x="5" y="3.2" width="3.1" height="3.2" rx="1" fill="#a8d286"></rect><rect x="0" y="6.9" width="9.4" height="2.7" fill="#64a434"></rect></svg>
<div class="t" style="left: 656.8px; top: 118px; font-size: 9.5px; color: rgb(68, 68, 68); letter-spacing: -0.495px;">Greg Smith</div>
<div class="b" style="left:165px;top:133.00px;width:567.3px;height:20.45px;background:#fff;border-top:1px solid #e6e9ec"></div>
<div class="b" style="left:165.3px;top:134.50px;width:1.8px;height:18.45px;background:#b9bdc0"></div>
<div class="b" style="left:173.1px;top:137.50px;width:11.5px;height:11px;border:1px solid #a9a9a9;border-radius:2px;background:#fff"></div>
<div class="t" style="left: 196.8px; top: 140px; font-size: 9.5px; color: rgb(91, 160, 216); letter-spacing: -0.649px;">SH1894</div>
<div class="t" style="right: 181.5px; top: 140px; font-size: 9.5px; color: rgb(68, 68, 68); letter-spacing: -0.129px;">10/14/2016</div>
<div class="t" style="right: 105.3px; top: 140px; font-size: 9.5px; color: rgb(68, 68, 68); letter-spacing: -0.395px;">$40.00</div>
<svg style="left:641px;top:137.00px" width="9.4" height="9.6" viewBox="0 0 9.4 9.6"><path d="M0 0.6 Q0 0 0.6 0 L4.6 0 L5.6 1.8 L8.8 1.8 Q9.4 1.8 9.4 2.4 L9.4 9.6 L0 9.6 Z" fill="#80bb4e"></path><rect x="1.3" y="1.8" width="2.6" height="4.6" fill="#b9dca2"></rect><rect x="5" y="3.2" width="3.1" height="3.2" rx="1" fill="#a8d286"></rect><rect x="0" y="6.9" width="9.4" height="2.7" fill="#64a434"></rect></svg>
<div class="t" style="left: 656.8px; top: 139px; font-size: 9.5px; color: rgb(68, 68, 68); letter-spacing: -0.495px;">Greg Smith</div>
<div class="b" style="left:165px;top:153.45px;width:567.3px;height:20.45px;background:#fff;border-top:1px solid #e6e9ec"></div>
<div class="b" style="left:165.3px;top:154.95px;width:1.8px;height:18.45px;background:#b9bdc0"></div>
<div class="b" style="left:173.1px;top:157.95px;width:11.5px;height:11px;border:1px solid #a9a9a9;border-radius:2px;background:#fff"></div>
<div class="t" style="left: 196.8px; top: 160px; font-size: 9.5px; color: rgb(91, 160, 216); letter-spacing: -0.649px;">SH1893</div>
<div class="t" style="right: 181.5px; top: 160px; font-size: 9.5px; color: rgb(68, 68, 68); letter-spacing: -0.129px;">10/14/2016</div>
<div class="t" style="right: 105.3px; top: 160px; font-size: 9.5px; color: rgb(68, 68, 68); letter-spacing: -0.395px;">$40.00</div>
<svg style="left:641px;top:157.45px" width="9.4" height="9.6" viewBox="0 0 9.4 9.6"><path d="M0 0.6 Q0 0 0.6 0 L4.6 0 L5.6 1.8 L8.8 1.8 Q9.4 1.8 9.4 2.4 L9.4 9.6 L0 9.6 Z" fill="#80bb4e"></path><rect x="1.3" y="1.8" width="2.6" height="4.6" fill="#b9dca2"></rect><rect x="5" y="3.2" width="3.1" height="3.2" rx="1" fill="#a8d286"></rect><rect x="0" y="6.9" width="9.4" height="2.7" fill="#64a434"></rect></svg>
<div class="t" style="left: 656.8px; top: 159px; font-size: 9.5px; color: rgb(68, 68, 68); letter-spacing: -0.495px;">Greg Smith</div>
<div class="b" style="left:165px;top:173.90px;width:567.3px;height:20.45px;background:#fff;border-top:1px solid #e6e9ec"></div>
<div class="b" style="left:165.3px;top:175.40px;width:1.8px;height:18.45px;background:#b9bdc0"></div>
<div class="b" style="left:173.1px;top:178.40px;width:11.5px;height:11px;border:1px solid #a9a9a9;border-radius:2px;background:#fff"></div>
<div class="t" style="left: 196.8px; top: 181px; font-size: 9.5px; color: rgb(91, 160, 216); letter-spacing: -0.649px;">SH3695</div>
<div class="t" style="right: 181.5px; top: 181px; font-size: 9.5px; color: rgb(68, 68, 68); letter-spacing: -0.129px;">08/23/2017</div>
<div class="t" style="right: 105.3px; top: 181px; font-size: 9.5px; color: rgb(68, 68, 68); letter-spacing: -0.395px;">$41.76</div>
<svg style="left:641px;top:177.90px" width="9.4" height="9.6" viewBox="0 0 9.4 9.6"><path d="M0 0.6 Q0 0 0.6 0 L4.6 0 L5.6 1.8 L8.8 1.8 Q9.4 1.8 9.4 2.4 L9.4 9.6 L0 9.6 Z" fill="#80bb4e"></path><rect x="1.3" y="1.8" width="2.6" height="4.6" fill="#b9dca2"></rect><rect x="5" y="3.2" width="3.1" height="3.2" rx="1" fill="#a8d286"></rect><rect x="0" y="6.9" width="9.4" height="2.7" fill="#64a434"></rect></svg>
<div class="t" style="left: 656.8px; top: 180px; font-size: 9.5px; color: rgb(68, 68, 68); letter-spacing: -0.169px;">Vegan Hotdogeater</div>
<div class="b" style="left:165px;top:194.35px;width:567.3px;height:20.45px;background:#fff;border-top:1px solid #e6e9ec"></div>
<div class="b" style="left:165.3px;top:195.85px;width:1.8px;height:18.45px;background:#b9bdc0"></div>
<div class="b" style="left:173.1px;top:198.85px;width:11.5px;height:11px;border:1px solid #a9a9a9;border-radius:2px;background:#fff"></div>
<div class="t" style="left: 196.8px; top: 201px; font-size: 9.5px; color: rgb(91, 160, 216); letter-spacing: -0.649px;">SH2067</div>
<div class="t" style="right: 181.5px; top: 201px; font-size: 9.5px; color: rgb(68, 68, 68); letter-spacing: -0.129px;">10/19/2016</div>
<div class="t" style="right: 105.3px; top: 201px; font-size: 9.5px; color: rgb(68, 68, 68); letter-spacing: -0.459px;">$120.37</div>
<svg style="left:641px;top:198.35px" width="10" height="9.5" viewBox="0 0 10 9.5"><path d="M5 0 L10 4.6 L8.6 4.6 L8.6 9.5 L6 9.5 L6 6.5 L4 6.5 L4 9.5 L1.4 9.5 L1.4 4.6 L0 4.6 Z" fill="#6aab3a"></path></svg>
<div class="t" style="left: 656.8px; top: 200px; font-size: 9.5px; color: rgb(68, 68, 68); letter-spacing: -0.241px;">Jillian Meier</div>
<div class="b" style="left:165px;top:214.80px;width:567.3px;height:20.45px;background:#fff;border-top:1px solid #e6e9ec"></div>
<div class="b" style="left:165.3px;top:216.30px;width:1.8px;height:18.45px;background:#b9bdc0"></div>
<div class="b" style="left:173.1px;top:219.30px;width:11.5px;height:11px;border:1px solid #a9a9a9;border-radius:2px;background:#fff"></div>
<div class="t" style="left: 196.8px; top: 221px; font-size: 9.5px; color: rgb(91, 160, 216); letter-spacing: -0.649px;">SH2065</div>
<div class="t" style="right: 181.5px; top: 221px; font-size: 9.5px; color: rgb(68, 68, 68); letter-spacing: -0.129px;">10/19/2016</div>
<div class="t" style="right: 105.3px; top: 221px; font-size: 9.5px; color: rgb(68, 68, 68); letter-spacing: -0.459px;">$200.00</div>
<svg style="left:641.2px;top:218.80px" width="9.5" height="9.5" viewBox="0 0 9.5 9.5"><circle cx="4.75" cy="4.75" r="4.75" fill="#111"></circle><path d="M3.2 3.7 A1.6 1.5 0 1 1 5.2 5 Q4.75 5.3 4.75 6" fill="none" stroke="#fff" stroke-width="1.1"></path><circle cx="4.75" cy="7.4" r="0.65" fill="#fff"></circle></svg>
<div class="t" style="left: 656.8px; top: 221px; font-size: 9.5px; color: rgb(68, 68, 68); letter-spacing: -0.241px;">Jillian Meier</div>
<div class="b" style="left:165px;top:235.25px;width:567.3px;height:20.45px;background:#fff;border-top:1px solid #e6e9ec"></div>
<div class="b" style="left:165.3px;top:236.75px;width:1.8px;height:18.45px;background:#b9bdc0"></div>
<div class="b" style="left:173.1px;top:239.75px;width:11.5px;height:11px;border:1px solid #a9a9a9;border-radius:2px;background:#fff"></div>
<div class="t" style="left: 196.8px; top: 242px; font-size: 9.5px; color: rgb(91, 160, 216); letter-spacing: -0.649px;">SH2074</div>
<div class="t" style="right: 181.5px; top: 242px; font-size: 9.5px; color: rgb(68, 68, 68); letter-spacing: -0.129px;">10/20/2016</div>
<div class="t" style="right: 105.3px; top: 242px; font-size: 9.5px; color: rgb(68, 68, 68); letter-spacing: -0.395px;">$12.12</div>
<svg style="left:641px;top:239.25px" width="9.4" height="9.6" viewBox="0 0 9.4 9.6"><path d="M0 0.6 Q0 0 0.6 0 L4.6 0 L5.6 1.8 L8.8 1.8 Q9.4 1.8 9.4 2.4 L9.4 9.6 L0 9.6 Z" fill="#80bb4e"></path><rect x="1.3" y="1.8" width="2.6" height="4.6" fill="#b9dca2"></rect><rect x="5" y="3.2" width="3.1" height="3.2" rx="1" fill="#a8d286"></rect><rect x="0" y="6.9" width="9.4" height="2.7" fill="#64a434"></rect></svg>
<div class="t" style="left: 656.8px; top: 241px; font-size: 9.5px; color: rgb(68, 68, 68); letter-spacing: -0.432px;">Ariel Le</div>
<div class="b" style="left:165px;top:255.70px;width:567.3px;height:20.45px;background:#fff;border-top:1px solid #e6e9ec"></div>
<div class="b" style="left:165.3px;top:257.20px;width:1.8px;height:18.45px;background:#b9bdc0"></div>
<div class="b" style="left:173.1px;top:260.20px;width:11.5px;height:11px;border:1px solid #a9a9a9;border-radius:2px;background:#fff"></div>
<div class="t" style="left: 196.8px; top: 262px; font-size: 9.5px; color: rgb(91, 160, 216); letter-spacing: -0.508px;">SH3311</div>
<div class="t" style="right: 181.5px; top: 262px; font-size: 9.5px; color: rgb(68, 68, 68); letter-spacing: -0.129px;">07/07/2017</div>
<div class="t" style="right: 105.3px; top: 262px; font-size: 9.5px; color: rgb(68, 68, 68); letter-spacing: -0.459px;">$104.98</div>
<svg style="left:641px;top:259.70px" width="10" height="9.5" viewBox="0 0 10 9.5"><path d="M5 0 L10 4.6 L8.6 4.6 L8.6 9.5 L6 9.5 L6 6.5 L4 6.5 L4 9.5 L1.4 9.5 L1.4 4.6 L0 4.6 Z" fill="#6aab3a"></path></svg>
<div class="t" style="left: 656.8px; top: 262px; font-size: 9.5px; color: rgb(68, 68, 68); letter-spacing: -0.513px;">Nate Branham</div>
<div class="b" style="left:165px;top:276.15px;width:567.3px;height:20.45px;background:#fff;border-top:1px solid #e6e9ec"></div>
<div class="b" style="left:165.3px;top:277.65px;width:1.8px;height:18.45px;background:#b9bdc0"></div>
<div class="b" style="left:173.1px;top:280.65px;width:11.5px;height:11px;border:1px solid #a9a9a9;border-radius:2px;background:#fff"></div>
<div class="t" style="left: 196.8px; top: 283px; font-size: 9.5px; color: rgb(91, 160, 216); letter-spacing: -0.649px;">SH3305</div>
<div class="t" style="left: 334.3px; top: 283px; font-size: 9.5px; color: rgb(68, 68, 68); letter-spacing: -0.211px;">(Multiple Items)</div>
<div class="t" style="right: 181.5px; top: 283px; font-size: 9.5px; color: rgb(68, 68, 68); letter-spacing: -0.129px;">07/06/2017</div>
<div class="t" style="right: 105.3px; top: 283px; font-size: 9.5px; color: rgb(68, 68, 68); letter-spacing: -0.459px;">$104.99</div>
<svg style="left:641px;top:280.15px" width="10" height="9.5" viewBox="0 0 10 9.5"><path d="M5 0 L10 4.6 L8.6 4.6 L8.6 9.5 L6 9.5 L6 6.5 L4 6.5 L4 9.5 L1.4 9.5 L1.4 4.6 L0 4.6 Z" fill="#6aab3a"></path></svg>
<div class="t" style="left: 656.8px; top: 282px; font-size: 9.5px; color: rgb(68, 68, 68); letter-spacing: -0.513px;">Nate Branham</div>
<div class="b" style="left:165px;top:296.60px;width:567.3px;height:20.45px;background:#fff;border-top:1px solid #e6e9ec"></div>
<div class="b" style="left:165.3px;top:298.10px;width:1.8px;height:18.45px;background:#b9bdc0"></div>
<div class="b" style="left:173.1px;top:301.10px;width:11.5px;height:11px;border:1px solid #a9a9a9;border-radius:2px;background:#fff"></div>
<div class="t" style="left: 196.8px; top: 303px; font-size: 9.5px; color: rgb(91, 160, 216); letter-spacing: -0.649px;">SH1893</div>
<div class="t" style="right: 181.5px; top: 303px; font-size: 9.5px; color: rgb(68, 68, 68); letter-spacing: -0.129px;">10/14/2016</div>
<div class="t" style="right: 105.3px; top: 303px; font-size: 9.5px; color: rgb(68, 68, 68); letter-spacing: -0.395px;">$40.00</div>
<svg style="left:641px;top:300.60px" width="9.4" height="9.6" viewBox="0 0 9.4 9.6"><path d="M0 0.6 Q0 0 0.6 0 L4.6 0 L5.6 1.8 L8.8 1.8 Q9.4 1.8 9.4 2.4 L9.4 9.6 L0 9.6 Z" fill="#80bb4e"></path><rect x="1.3" y="1.8" width="2.6" height="4.6" fill="#b9dca2"></rect><rect x="5" y="3.2" width="3.1" height="3.2" rx="1" fill="#a8d286"></rect><rect x="0" y="6.9" width="9.4" height="2.7" fill="#64a434"></rect></svg>
<div class="t" style="left: 656.8px; top: 302px; font-size: 9.5px; color: rgb(68, 68, 68); letter-spacing: -0.495px;">Greg Smith</div>
<div class="b" style="left:165px;top:317.05px;width:567.3px;height:20.45px;background:#fff;border-top:1px solid #e6e9ec"></div>
<div class="b" style="left:165.3px;top:318.55px;width:1.8px;height:18.45px;background:#b9bdc0"></div>
<div class="b" style="left:173.1px;top:321.55px;width:11.5px;height:11px;border:1px solid #a9a9a9;border-radius:2px;background:#fff"></div>
<div class="t" style="left: 196.8px; top: 324px; font-size: 9.5px; color: rgb(91, 160, 216); letter-spacing: -0.649px;">SH1892</div>
<div class="t" style="right: 181.5px; top: 324px; font-size: 9.5px; color: rgb(68, 68, 68); letter-spacing: -0.129px;">10/14/2016</div>
<div class="t" style="right: 105.3px; top: 324px; font-size: 9.5px; color: rgb(68, 68, 68); letter-spacing: -0.297px;">$2.17</div>
<svg style="left:641px;top:321.05px" width="9.4" height="9.6" viewBox="0 0 9.4 9.6"><path d="M0 0.6 Q0 0 0.6 0 L4.6 0 L5.6 1.8 L8.8 1.8 Q9.4 1.8 9.4 2.4 L9.4 9.6 L0 9.6 Z" fill="#80bb4e"></path><rect x="1.3" y="1.8" width="2.6" height="4.6" fill="#b9dca2"></rect><rect x="5" y="3.2" width="3.1" height="3.2" rx="1" fill="#a8d286"></rect><rect x="0" y="6.9" width="9.4" height="2.7" fill="#64a434"></rect></svg>
<div class="t" style="left: 656.8px; top: 323px; font-size: 9.5px; color: rgb(68, 68, 68); letter-spacing: -0.495px;">Greg Smith</div>
<div class="b" style="left:165px;top:337.50px;width:567.3px;height:20.45px;background:#fff;border-top:1px solid #e6e9ec"></div>
<div class="b" style="left:165.3px;top:339.00px;width:1.8px;height:18.45px;background:#b9bdc0"></div>
<div class="b" style="left:173.1px;top:342.00px;width:11.5px;height:11px;border:1px solid #a9a9a9;border-radius:2px;background:#fff"></div>
<div class="t" style="left: 196.8px; top: 344px; font-size: 9.5px; color: rgb(91, 160, 216); letter-spacing: -0.649px;">SH2080</div>
<div class="t" style="right: 181.5px; top: 344px; font-size: 9.5px; color: rgb(68, 68, 68); letter-spacing: -0.129px;">10/20/2016</div>
<div class="t" style="right: 105.3px; top: 344px; font-size: 9.5px; color: rgb(68, 68, 68); letter-spacing: -0.395px;">$27.06</div>
<svg style="left:641.2px;top:341.50px" width="9.5" height="9.5" viewBox="0 0 9.5 9.5"><circle cx="4.75" cy="4.75" r="4.75" fill="#111"></circle><path d="M3.2 3.7 A1.6 1.5 0 1 1 5.2 5 Q4.75 5.3 4.75 6" fill="none" stroke="#fff" stroke-width="1.1"></path><circle cx="4.75" cy="7.4" r="0.65" fill="#fff"></circle></svg>
<div class="t" style="left: 656.8px; top: 343px; font-size: 9.5px; color: rgb(68, 68, 68); letter-spacing: -0.495px;">Greg Smith</div>
<div class="b" style="left:165px;top:357.95px;width:567.3px;height:20.45px;background:#fff;border-top:1px solid #e6e9ec"></div>
<div class="b" style="left:165.3px;top:359.45px;width:1.8px;height:18.45px;background:#b9bdc0"></div>
<div class="b" style="left:173.1px;top:362.45px;width:11.5px;height:11px;border:1px solid #a9a9a9;border-radius:2px;background:#fff"></div>
<div class="t" style="left: 196.8px; top: 365px; font-size: 9.5px; color: rgb(91, 160, 216); letter-spacing: -0.649px;">SH2079</div>
<div class="t" style="right: 181.5px; top: 365px; font-size: 9.5px; color: rgb(68, 68, 68); letter-spacing: -0.129px;">10/20/2016</div>
<div class="t" style="right: 105.3px; top: 365px; font-size: 9.5px; color: rgb(68, 68, 68); letter-spacing: -0.395px;">$16.24</div>
<svg style="left:641px;top:361.95px" width="9.4" height="9.6" viewBox="0 0 9.4 9.6"><path d="M0 0.6 Q0 0 0.6 0 L4.6 0 L5.6 1.8 L8.8 1.8 Q9.4 1.8 9.4 2.4 L9.4 9.6 L0 9.6 Z" fill="#80bb4e"></path><rect x="1.3" y="1.8" width="2.6" height="4.6" fill="#b9dca2"></rect><rect x="5" y="3.2" width="3.1" height="3.2" rx="1" fill="#a8d286"></rect><rect x="0" y="6.9" width="9.4" height="2.7" fill="#64a434"></rect></svg>
<div class="t" style="left: 656.8px; top: 364px; font-size: 9.5px; color: rgb(68, 68, 68); letter-spacing: -0.495px;">Greg Smith</div>
<div class="b" style="left:165px;top:378.40px;width:567.3px;height:20.45px;background:#fff;border-top:1px solid #e6e9ec"></div>
<div class="b" style="left:165.3px;top:379.90px;width:1.8px;height:18.45px;background:#b9bdc0"></div>
<div class="b" style="left:173.1px;top:382.90px;width:11.5px;height:11px;border:1px solid #a9a9a9;border-radius:2px;background:#fff"></div>
<div class="t" style="left: 196.8px; top: 385px; font-size: 9.5px; color: rgb(91, 160, 216); letter-spacing: -0.649px;">SH2078</div>
<div class="t" style="right: 181.5px; top: 385px; font-size: 9.5px; color: rgb(68, 68, 68); letter-spacing: -0.129px;">10/20/2016</div>
<div class="t" style="right: 105.3px; top: 385px; font-size: 9.5px; color: rgb(68, 68, 68); letter-spacing: -0.395px;">$27.06</div>
<svg style="left:641px;top:382.40px" width="9.4" height="9.6" viewBox="0 0 9.4 9.6"><path d="M0 0.6 Q0 0 0.6 0 L4.6 0 L5.6 1.8 L8.8 1.8 Q9.4 1.8 9.4 2.4 L9.4 9.6 L0 9.6 Z" fill="#80bb4e"></path><rect x="1.3" y="1.8" width="2.6" height="4.6" fill="#b9dca2"></rect><rect x="5" y="3.2" width="3.1" height="3.2" rx="1" fill="#a8d286"></rect><rect x="0" y="6.9" width="9.4" height="2.7" fill="#64a434"></rect></svg>
<div class="t" style="left: 656.8px; top: 384px; font-size: 9.5px; color: rgb(68, 68, 68); letter-spacing: -0.495px;">Greg Smith</div>
</div>
<div class="b" style="left:165.2px;top:117.2px;width:567px;height:21.8px;background:#edf3f9;border-top:1px solid #d6dee6;border-bottom:1px solid #cfd8e0;border-left:1px solid #d6dee6"></div>
<div class="b" style="left:172.9px;top:123px;width:11.5px;height:11.5px;border:1px solid #a9a9a9;border-radius:2px;background:#fff"></div>
<div class="b" style="left:192.3px;top:118.2px;width:1px;height:19px;background:#d3dbe3"></div>
<div class="b" style="left:329.2px;top:118.2px;width:1px;height:19px;background:#d3dbe3"></div>
<div class="b" style="left:405.6px;top:118.2px;width:1px;height:19px;background:#d3dbe3"></div>
<div class="b" style="left:481.3px;top:118.2px;width:1px;height:19px;background:#d3dbe3"></div>
<div class="b" style="left:557.2px;top:118.2px;width:1px;height:19px;background:#d3dbe3"></div>
<div class="b" style="left:632.3px;top:118.2px;width:1px;height:19px;background:#d3dbe3"></div>
<div class="t" style="left: 197.5px; top: 124px; font-size: 9.5px; color: rgb(51, 51, 51); letter-spacing: -0.604px;">Order #</div>
<div class="b" style="left:330px;top:117px;width:75px;height:21px;overflow:hidden"><div class="t" style="left: 4.6px; top: 7px; font-size: 9.5px; color: rgb(51, 51, 51); letter-spacing: -0.618px;">Warehouse Location</div></div>
<div class="t" style="left: 410.9px; top: 124px; font-size: 9.5px; color: rgb(51, 51, 51); letter-spacing: -0.639px;">Tags</div>
<div class="t" style="left: 496.5px; top: 124px; font-size: 9.5px; color: rgb(51, 51, 51); letter-spacing: -0.556px;">Order Date</div>
<div class="t" style="left: 571.7px; top: 124px; font-size: 9.5px; color: rgb(51, 51, 51); letter-spacing: -0.338px;">Order Total</div>
<div class="t" style="left: 638.4px; top: 124px; font-size: 9.5px; color: rgb(51, 51, 51); letter-spacing: -0.496px;">Recipient</div>
<div class="b" style="left:161px;top:533px;width:575px;height:27px;background:#f3f3f4"></div>
<div class="b" style="left:161px;top:532.6px;width:575px;height:1px;background:#dedede"></div>
<div class="b" style="left:161px;top:558.8px;width:860px;height:1.2px;background:#cfcfcf"></div>
<div class="t" style="left: 174.6px; top: 541px; font-size: 9.5px; color: rgb(51, 51, 51); letter-spacing: -0.342px;">Row 1 to 102 of 102</div>
<div class="b" style="left:436.4px;top:546.4px;width:30.2px;height:14px;background:#fff;border:1px solid #c8c8c8;border-bottom:none;border-radius:2px 2px 0 0"></div>
<svg style="left:449px;top:552px" width="5.5" height="3.2" viewBox="0 0 5.5 3.2"><path d="M0 3.2 L2.75 0 L5.5 3.2 Z" fill="#222"></path></svg>
<div class="b" style="left:655.1px;top:538.3px;width:36.7px;height:14.2px;background:#fff;border:1px solid #c4c4c4;border-radius:1px"></div>
<div class="t" style="left: 663px; top: 542px; font-size: 9.5px; color: rgb(51, 51, 51); letter-spacing: -0.783px;">500</div>
<svg style="left:679.5px;top:544.8px" width="5" height="3" viewBox="0 0 5 3"><path d="M0 0 L5 0 L2.5 3 Z" fill="#222"></path></svg>
<div class="t" style="left: 694.7px; top: 542px; font-size: 9.5px; color: rgb(68, 68, 68); letter-spacing: -0.503px;">per page</div>
<div class="b" style="left:736px;top:117px;width:284.5px;height:443px;background:#fcfcfc"></div>
<div class="b" style="left:735.9px;top:117.6px;width:1.8px;height:443px;background:#989da1"></div>
<div class="b" style="left:737.6px;top:117.3px;width:283px;height:21.2px;background:#edf3f9;border-top:1px solid #d6dee6;border-bottom:1px solid #cfd8e0"></div>
<div class="t" style="left: 742.9px; top: 121px; font-size: 12px; color: rgb(58, 58, 58); letter-spacing: -0.602px;">No Orders Selected...</div>
<div class="b" style="left:746.4px;top:147.3px;width:266.4px;height:30.7px;background:#fff;border:1px solid #dcdcdc;border-radius:4px"></div>
<div class="t" style="left: 756.4px; top: 159px; font-size: 9.5px; color: rgb(51, 51, 51); letter-spacing: -0.3px;">Select one or more orders in the list to make changes</div>
<div class="b" style="left:1020.6px;top:0px;width:3.4px;height:37px;background:#1f262d"></div>
<div class="b" style="left:1020.6px;top:37px;width:3.4px;height:523px;background:#3c3f44"></div>
</body></html>
